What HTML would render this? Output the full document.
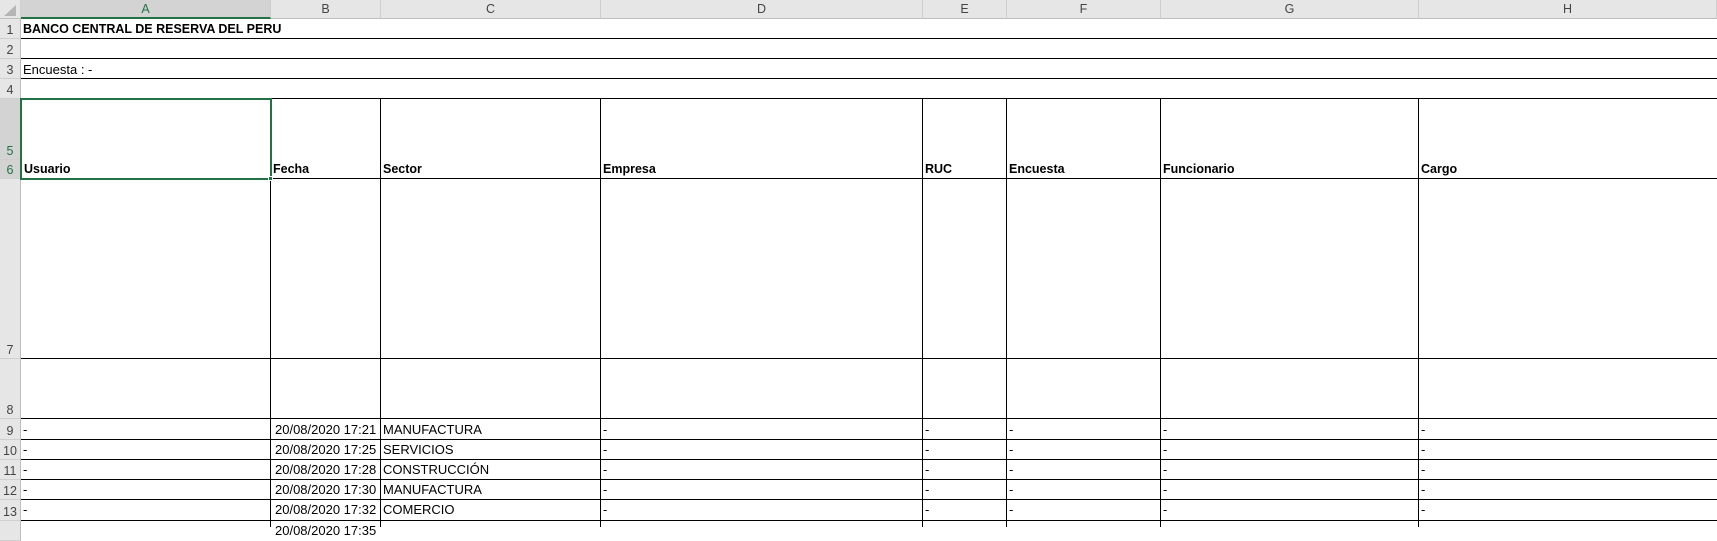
<!DOCTYPE html><html><head><style>
body{margin:0;width:1717px;height:527px;overflow:hidden;background:#fff;font-family:"Liberation Sans",sans-serif;font-size:13px;color:#000;position:relative}
div{position:absolute;box-sizing:border-box}
.h{background:#000;height:1px}
.v{background:#000;width:1px}
.ch{top:0;height:19px;background:#e6e6e6;border-right:1px solid #cfcfcf;border-bottom:1px solid #bdbdbd;text-align:center;line-height:19px;color:#444;font-size:12.5px}
.rh{left:0;width:21px;background:#e6e6e6;border-right:1px solid #bdbdbd;border-bottom:1px solid #cfcfcf;text-align:center;color:#444;font-size:12.5px;display:flex;align-items:flex-end;justify-content:center;padding-bottom:1px}
.t{white-space:nowrap;line-height:19px}
.b{font-weight:bold;font-size:12.5px}
</style></head><body>
<div class="ch" style="left:0;width:21px"></div>
<div style="left:4px;top:5px;width:0;height:0;border-left:12px solid transparent;border-bottom:11px solid #b5b5b5"></div>
<div class="ch" style="left:21px;width:250px;background:#d3d3d3;border-bottom:2px solid #217346;color:#217346">A</div>
<div class="ch" style="left:271px;width:110px">B</div>
<div class="ch" style="left:381px;width:220px">C</div>
<div class="ch" style="left:601px;width:322px">D</div>
<div class="ch" style="left:923px;width:84px">E</div>
<div class="ch" style="left:1007px;width:154px">F</div>
<div class="ch" style="left:1161px;width:258px">G</div>
<div class="ch" style="left:1419px;width:298px">H</div>

<div class="rh" style="top:19px;height:20px">1</div>
<div class="rh" style="top:39px;height:20px">2</div>
<div class="rh" style="top:59px;height:20px">3</div>
<div class="rh" style="top:79px;height:20px">4</div>
<div class="rh" style="top:99px;height:61px;background:#d3d3d3;color:#217346">5</div>
<div class="rh" style="top:160px;height:19px;background:#d3d3d3;color:#217346">6</div>
<div class="rh" style="top:179px;height:180px">7</div>
<div class="rh" style="top:359px;height:60px">8</div>
<div class="rh" style="top:419px;height:21px">9</div>
<div class="rh" style="top:440px;height:20px">10</div>
<div class="rh" style="top:460px;height:20px">11</div>
<div class="rh" style="top:480px;height:20px">12</div>
<div class="rh" style="top:500px;height:21px">13</div>
<div class="rh" style="top:521px;height:20px"></div>

<div class="h" style="left:21px;right:0;top:38px"></div>
<div class="h" style="left:21px;right:0;top:58px"></div>
<div class="h" style="left:21px;right:0;top:78px"></div>
<div class="h" style="left:21px;right:0;top:98px"></div>
<div class="h" style="left:21px;right:0;top:178px"></div>
<div class="h" style="left:21px;right:0;top:358px"></div>
<div class="h" style="left:21px;right:0;top:418px"></div>
<div class="h" style="left:21px;right:0;top:439px"></div>
<div class="h" style="left:21px;right:0;top:459px"></div>
<div class="h" style="left:21px;right:0;top:479px"></div>
<div class="h" style="left:21px;right:0;top:499px"></div>
<div class="h" style="left:21px;right:0;top:520px"></div>

<div class="v" style="left:270px;top:98px;bottom:0"></div>
<div class="v" style="left:380px;top:98px;bottom:0"></div>
<div class="v" style="left:600px;top:98px;bottom:0"></div>
<div class="v" style="left:922px;top:98px;bottom:0"></div>
<div class="v" style="left:1006px;top:98px;bottom:0"></div>
<div class="v" style="left:1160px;top:98px;bottom:0"></div>
<div class="v" style="left:1418px;top:98px;bottom:0"></div>

<div style="left:20px;top:98px;width:252px;height:82px;border:2px solid #217346"></div>
<div style="left:268px;top:176px;width:5px;height:5px;background:#217346;border:1px solid #fff"></div>

<div class="t b" style="left:23px;top:20px">BANCO CENTRAL DE RESERVA DEL PERU</div>
<div class="t" style="left:23px;top:60px">Encuesta : -</div>
<div class="t b" style="left:24px;top:160px">Usuario</div>
<div class="t b" style="left:273px;top:160px">Fecha</div>
<div class="t b" style="left:383px;top:160px">Sector</div>
<div class="t b" style="left:603px;top:160px">Empresa</div>
<div class="t b" style="left:925px;top:160px">RUC</div>
<div class="t b" style="left:1009px;top:160px">Encuesta</div>
<div class="t b" style="left:1163px;top:160px">Funcionario</div>
<div class="t b" style="left:1421px;top:160px">Cargo</div>

<div style="left:0;top:420px;width:1717px;height:120px">
<div class="t" style="left:23px;top:0">-</div><div class="t" style="left:275px;top:0">20/08/2020 17:21</div><div class="t" style="left:383px;top:0">MANUFACTURA</div><div class="t" style="left:603px;top:0">-</div><div class="t" style="left:925px;top:0">-</div><div class="t" style="left:1009px;top:0">-</div><div class="t" style="left:1163px;top:0">-</div><div class="t" style="left:1421px;top:0">-</div>
<div class="t" style="left:23px;top:20px">-</div><div class="t" style="left:275px;top:20px">20/08/2020 17:25</div><div class="t" style="left:383px;top:20px">SERVICIOS</div><div class="t" style="left:603px;top:20px">-</div><div class="t" style="left:925px;top:20px">-</div><div class="t" style="left:1009px;top:20px">-</div><div class="t" style="left:1163px;top:20px">-</div><div class="t" style="left:1421px;top:20px">-</div>
<div class="t" style="left:23px;top:40px">-</div><div class="t" style="left:275px;top:40px">20/08/2020 17:28</div><div class="t" style="left:383px;top:40px">CONSTRUCCIÓN</div><div class="t" style="left:603px;top:40px">-</div><div class="t" style="left:925px;top:40px">-</div><div class="t" style="left:1009px;top:40px">-</div><div class="t" style="left:1163px;top:40px">-</div><div class="t" style="left:1421px;top:40px">-</div>
<div class="t" style="left:23px;top:60px">-</div><div class="t" style="left:275px;top:60px">20/08/2020 17:30</div><div class="t" style="left:383px;top:60px">MANUFACTURA</div><div class="t" style="left:603px;top:60px">-</div><div class="t" style="left:925px;top:60px">-</div><div class="t" style="left:1009px;top:60px">-</div><div class="t" style="left:1163px;top:60px">-</div><div class="t" style="left:1421px;top:60px">-</div>
<div class="t" style="left:23px;top:80px">-</div><div class="t" style="left:275px;top:80px">20/08/2020 17:32</div><div class="t" style="left:383px;top:80px">COMERCIO</div><div class="t" style="left:603px;top:80px">-</div><div class="t" style="left:925px;top:80px">-</div><div class="t" style="left:1009px;top:80px">-</div><div class="t" style="left:1163px;top:80px">-</div><div class="t" style="left:1421px;top:80px">-</div>
<div class="t" style="left:275px;top:101px">20/08/2020 17:35</div>
</div>
</body></html>
